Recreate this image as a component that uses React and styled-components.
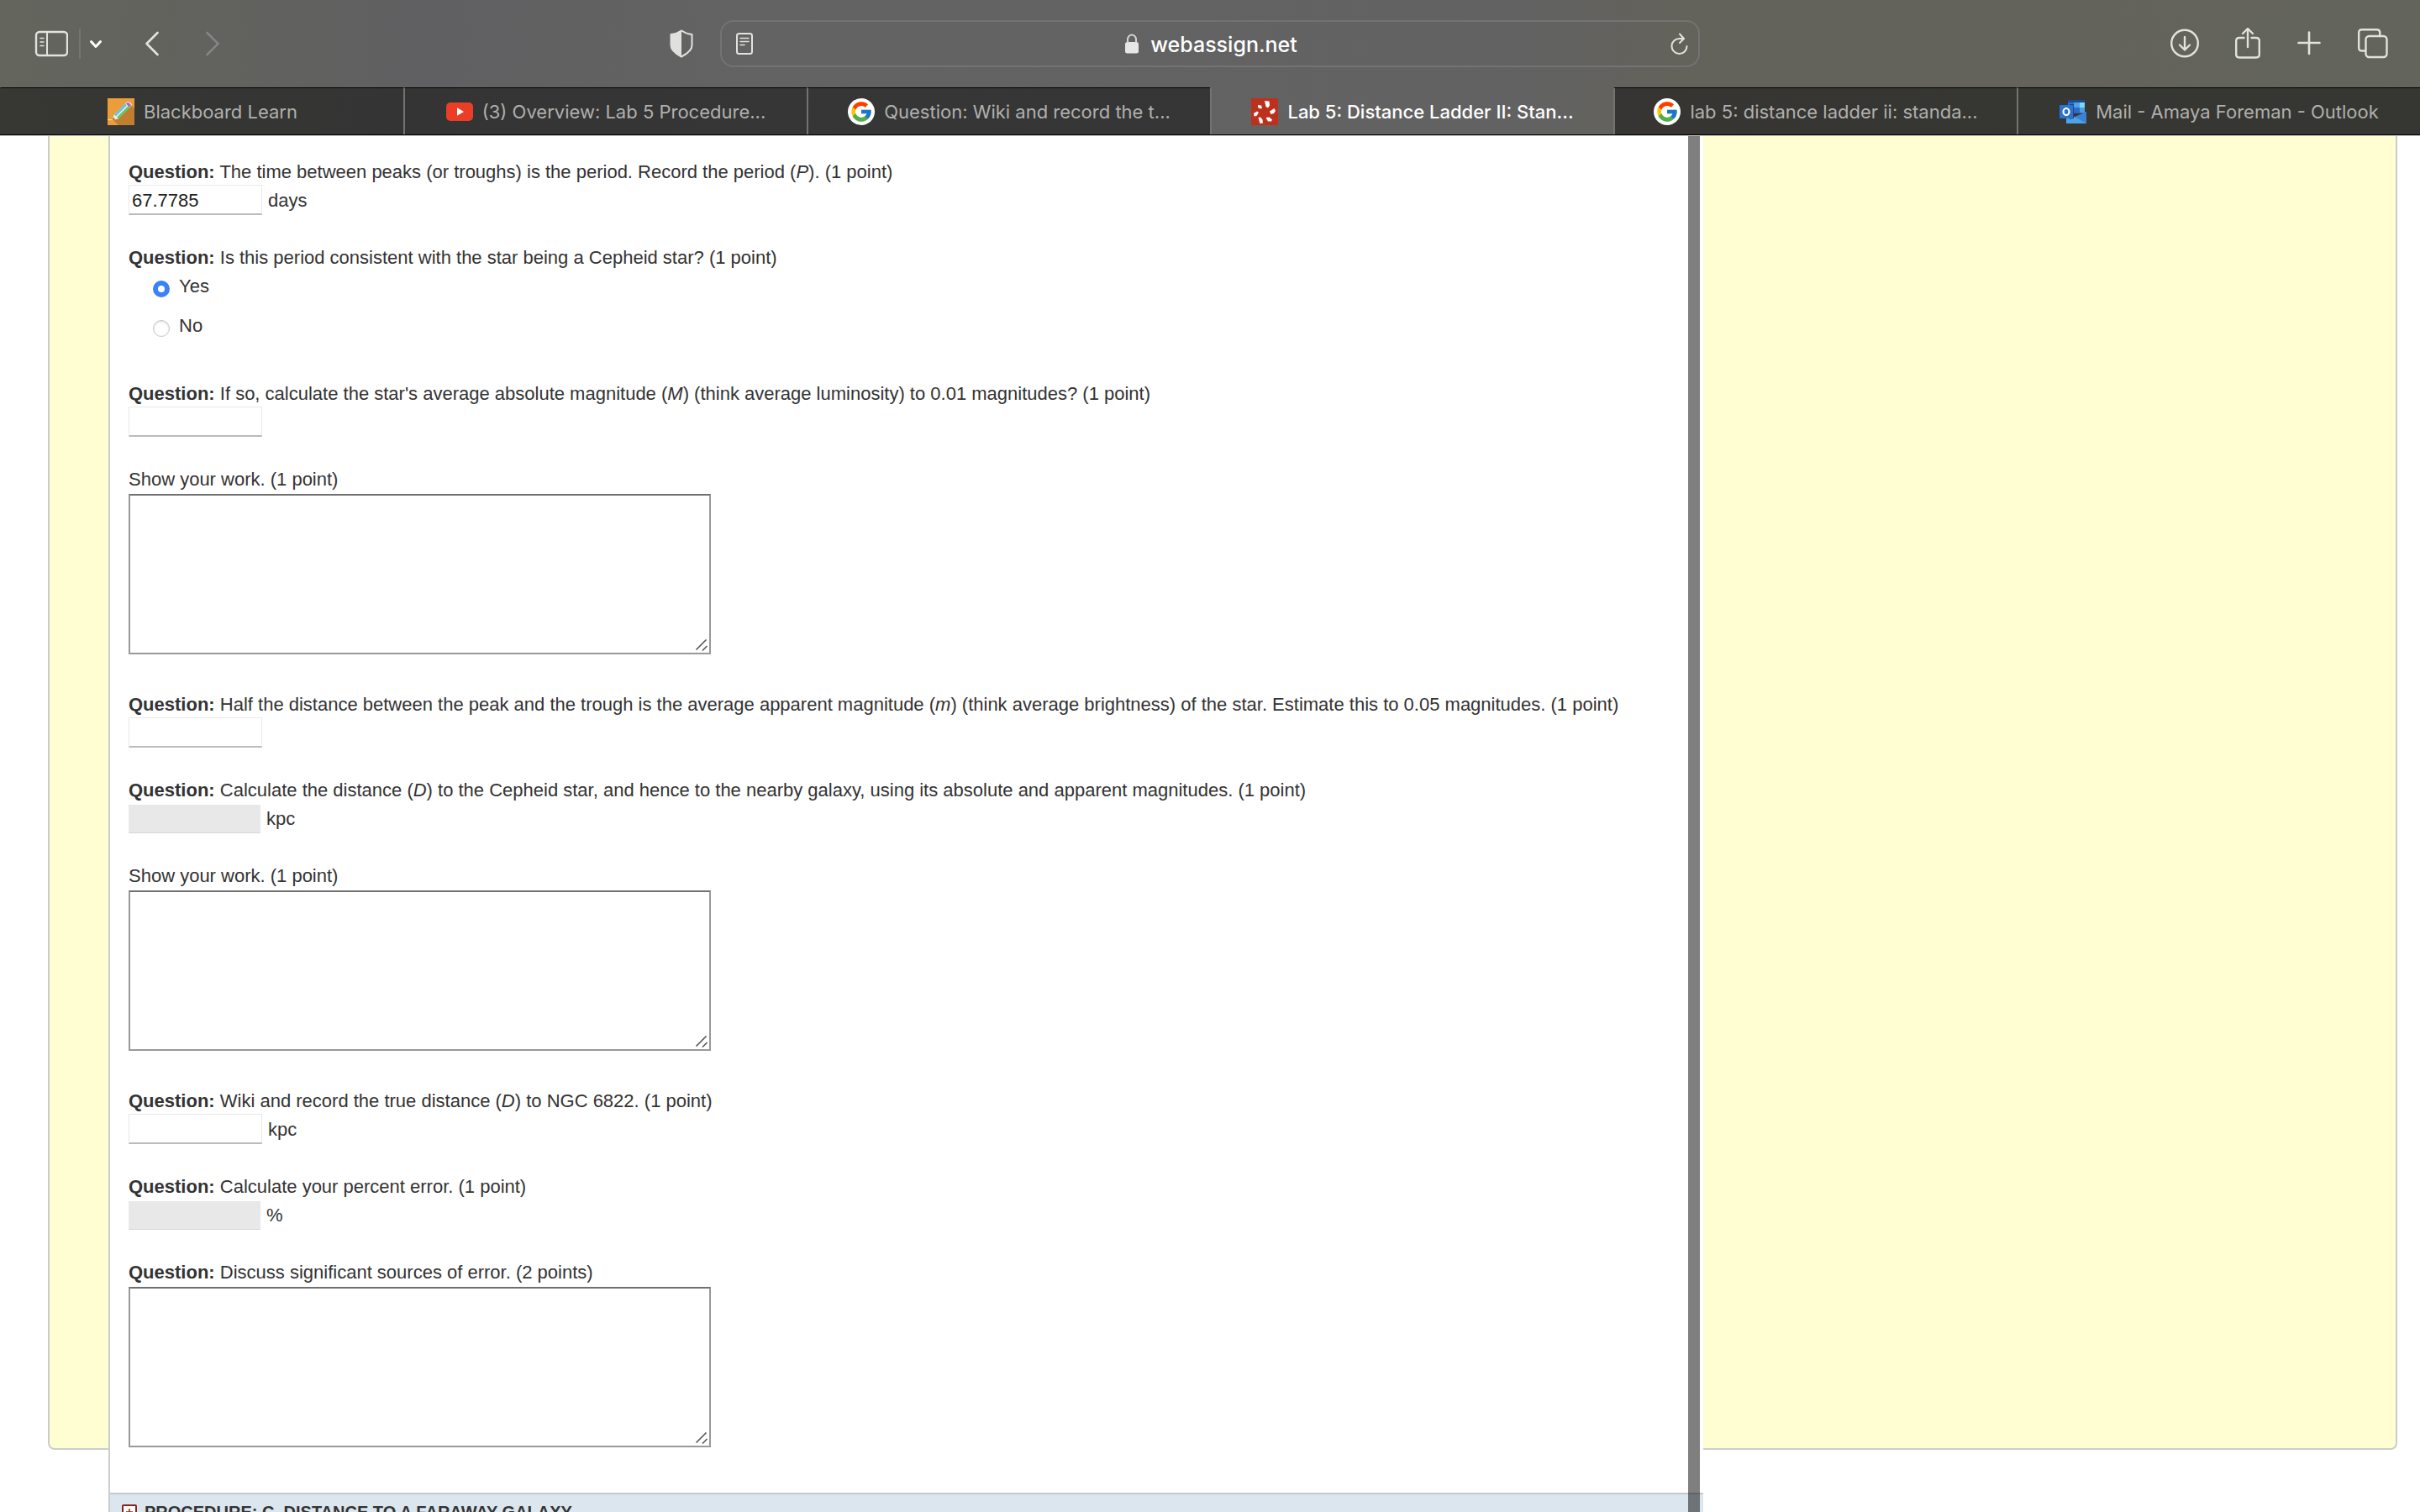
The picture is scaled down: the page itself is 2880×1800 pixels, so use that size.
import React, { useState } from 'react';
import styled, { createGlobalStyle } from 'styled-components';
import { FcGoogle } from 'react-icons/fc';

const TABS = [
  { title: 'Blackboard Learn', icon: 'pencil' },
  { title: '(3) Overview: Lab 5 Procedure...', icon: 'youtube' },
  { title: 'Question: Wiki and record the t...', icon: 'google' },
  { title: 'Lab 5: Distance Ladder II: Stan...', icon: 'webassign' },
  { title: 'lab 5: distance ladder ii: standa...', icon: 'google' },
  { title: 'Mail - Amaya Foreman - Outlook', icon: 'outlook' },
];

//////////  FAVICONS

const PencilIcon = () => (
  <svg width="32" height="32" viewBox="0 0 32 32" aria-hidden="true">
    <rect width="32" height="32" fill="#eb9d3a" />
    <path d="M28 8 32 12V32H13L7 26Z" fill="#c17e2c" />
    <path d="M0 25.500H8" stroke="#f6d6a4" strokeWidth="1.200" />
    <path d="M6 26 7.500 20 23 4.500Q25 3 27.500 5.500T28 9L12.500 24.500Z" fill="#f4f1e4" />
    <path d="M9 20.500 22 7.500" stroke="#5bc3ef" strokeWidth="2.600" />
    <path d="M12 23.500 25.500 10" stroke="#62c46c" strokeWidth="2.600" />
    <path d="m22.500 6.500 2-1.500 3 3-1.500 2Z" fill="#a865c0" stroke="#a865c0" />
    <path d="m6 26 1-3 2 2Z" fill="#6b4a25" />
  </svg>
);

const YoutubeIcon = () => (
  <svg width="32" height="32" viewBox="0 0 32 32" aria-hidden="true">
    <rect y="5" width="32" height="22" rx="5" fill="#ea3f26" />
    <path d="M13 11.300 21 16l-8 4.700Z" fill="#fff" />
  </svg>
);

const WebAssignIcon = () => (
  <svg width="32" height="32" viewBox="0 0 32 32" aria-hidden="true">
    <rect width="32" height="32" fill="#bd301c" />
    <g fill="#fff">
      <path d="m16 3 5.500.500.500 5-2 3-2.500-1.500Z" />
      <path d="m22 15.500 5.500-3.500 1.500 3-2 3-3.500 1Z" />
      <path d="m17.500 23 4-.5 3.500 3-1 2h-4Z" />
      <path d="m8.500 23 2.500-.5 2.500 3 .5 4-3.500.5Z" />
      <path d="m3 18 4-2.500 2 1.500-2.500 4-3 .5Z" />
      <path d="m8 8 4 .5 1 3-2 1-3-1.500Z" />
    </g>
  </svg>
);

const OutlookIcon = () => (
  <svg width="32" height="32" viewBox="0 0 32 32" aria-hidden="true">
    <path d="M10 2h20v16H10Z" fill="#2a66c0" />
    <path d="M10 2h20v3H10Z" fill="#204a90" />
    <path d="M10 5h7v7h-7Z" fill="#2c6fce" />
    <path d="M17 5h7v6h-7Z" fill="#4ba3ea" />
    <path d="M24 5h6v6h-6Z" fill="#79d7fa" />
    <path d="M17 11h7v6h-7Z" fill="#2f6bc6" />
    <path d="M24 11h6v6h-6Z" fill="#4a9ee6" />
    <path d="M8 17 20 23 32 16v14H8Z" fill="#4ea3e8" />
    <path d="m18 22 14 8V16Z" fill="#3c82d2" />
    <path d="M12 7h5v17l-5 1Z" fill="#1f4684" />
    <rect y="8" width="16" height="16" rx="1" fill="#2d72cf" />
    <ellipse cx="8" cy="16" rx="3.500" ry="4" fill="none" stroke="#fff" strokeWidth="2.200" />
  </svg>
);

const GoogleIcon = () => (
  <GoogleDisc>
    <FcGoogle size={28} aria-hidden="true" />
  </GoogleDisc>
);

const FAVICONS = {
  pencil: PencilIcon,
  youtube: YoutubeIcon,
  google: GoogleIcon,
  webassign: WebAssignIcon,
  outlook: OutlookIcon,
};

//////////  BROWSER BAR

function Toolbar() {
  return (
    <Bar>
      <BarSide>
        <BarButton aria-label="Sidebar">
          <Stroke width="40" height="32" viewBox="0 0 40 32">
            <rect x="2" y="2" width="37" height="28" rx="4" />
            <path d="M15 2v28" strokeWidth="2" />
            <path d="M7 9.500h4M7 14h4M7 18.500h4" strokeWidth="1.600" />
          </Stroke>
        </BarButton>
        <Divider />
        <BarButton aria-label="Tab groups">
          <Stroke width="16" height="32" viewBox="0 0 16 32" $color="#fff">
            <path d="m2.500 13.500 5.500 6 5.500-6" strokeWidth="3" />
          </Stroke>
        </BarButton>
        <BarButton aria-label="Back" $gap={50}>
          <Stroke width="18" height="32" viewBox="0 0 18 32">
            <path d="M15.500 3 2.500 16l13 13" strokeWidth="2.600" />
          </Stroke>
        </BarButton>
        <BarButton aria-label="Forward" $gap={54} disabled>
          <Stroke width="18" height="32" viewBox="0 0 18 32" $color="#858585">
            <path d="m2.500 3 13 13-13 13" strokeWidth="2.600" />
          </Stroke>
        </BarButton>
        <ShieldButton aria-label="Privacy report">
          <Stroke width="28" height="34" viewBox="0 0 28 34">
            <path d="M14 1.500Q20 5.500 26.500 6v13Q26.500 26 14 32.500 1.500 26 1.500 19V6Q8 5.500 14 1.500Z" strokeWidth="2" />
            <path d="M14 1.500v31Q1.500 26 1.500 19V6Q8 5.500 14 1.500Z" fill="#e0e0df" stroke="none" />
          </Stroke>
        </ShieldButton>
      </BarSide>

      <AddressBar>
        <BarButton aria-label="Reader">
          <Stroke width="20" height="26" viewBox="0 0 20 26">
            <rect x="1" y="1" width="18" height="24" rx="2.500" strokeWidth="2" />
            <path d="M5 6.500h10M5 10.500h10M5 14.500h5" strokeWidth="1.600" />
          </Stroke>
        </BarButton>
        <Address>
          <svg width="16" height="24" viewBox="0 0 16 24" aria-hidden="true">
            <rect y="10" width="16" height="13.500" rx="2.500" fill="#e6e6e6" />
            <path d="M3 11V7a5 5.500 0 0 1 10 0v4" fill="none" stroke="#d4d4d4" strokeWidth="2" />
          </svg>
          <AddressInput aria-label="Address" defaultValue="webassign.net" />
        </Address>
        <BarButton aria-label="Reload">
          <Stroke width="22" height="26" viewBox="0 0 22 26">
            <path d="M20.500 16A9 9 0 1 1 12 7h4.500" strokeWidth="2" />
            <path d="m12 1.500 5 5.500-5 5" strokeWidth="2" />
          </Stroke>
        </BarButton>
      </AddressBar>

      <BarSide $end>
        <BarButton aria-label="Downloads">
          <Stroke width="34" height="38" viewBox="0 0 34 38">
            <circle cx="17" cy="18.500" r="15.800" />
            <path d="M17 11v15M11 20.500l6 6 6-6" strokeWidth="2.400" />
          </Stroke>
        </BarButton>
        <BarButton aria-label="Share" $gap={43}>
          <Stroke width="30" height="38" viewBox="0 0 30 38">
            <path d="M10.500 12H5q-3.800 0-3.800 3.800v16Q1.200 35.500 5 35.500h20q3.800 0 3.800-3.700v-16Q28.800 12 25 12h-5.500" />
            <path d="M15 23V1.500M9 7l6-6 6 6" />
          </Stroke>
        </BarButton>
        <BarButton aria-label="New tab" $gap={44}>
          <Stroke width="28" height="38" viewBox="0 0 28 38">
            <path d="M14 5.500v25.500M1.500 18h25" strokeWidth="2.600" />
          </Stroke>
        </BarButton>
        <BarButton aria-label="Tab overview" $gap={44}>
          <Stroke width="36" height="38" viewBox="0 0 36 38">
            <rect x="9.500" y="10" width="25" height="25" rx="4" />
            <path d="M9 27.500H5q-3.800 0-3.800-3.800V6q0-3.800 3.800-3.800h17.500q3.800 0 3.800 3.800V10" />
          </Stroke>
        </BarButton>
      </BarSide>
    </Bar>
  );
}

//////////  WORKSHEET

function Prompt({ id, children, plain }) {
  return (
    <Label htmlFor={id}>
      {!plain && <><b>Question:</b> </>}
      {children}
    </Label>
  );
}

function Answer({ id, unit, value, disabled }) {
  return (
    <AnswerRow>
      <AnswerInput id={id} defaultValue={value} disabled={disabled} />
      {unit && <span>{unit}</span>}
    </AnswerRow>
  );
}

function WorkArea({ id }) {
  return (
    <WorkBox>
      <WorkText id={id} />
      <Grip width="16" height="16" viewBox="0 0 16 16" aria-hidden="true">
        <path d="M1.500 13.500 13.500 1.500M9 14.500 14.500 9" stroke="#555" strokeWidth="1.600" />
      </Grip>
    </WorkBox>
  );
}

function Worksheet() {
  const [consistent, setConsistent] = useState('Yes');

  return (
    <Sheet>
      <Block>
        <Prompt id="period">The time between peaks (or troughs) is the period. Record the period (<i>P</i>). (1 point)</Prompt>
        <Answer id="period" value="67.7785" unit="days" />
      </Block>
      <Choices>
        <legend><b>Question:</b> Is this period consistent with the star being a Cepheid star? (1 point)</legend>
        {['Yes', 'No'].map((choice) => (
          <Choice key={choice}>
            <Radio
              type="radio"
              name="consistent"
              checked={consistent === choice}
              onChange={() => setConsistent(choice)}
            />
            {choice}
          </Choice>
        ))}
      </Choices>
      <Block>
        <Prompt id="absolute">If so, calculate the star's average absolute magnitude (<i>M</i>) (think average luminosity) to 0.01 magnitudes? (1 point)</Prompt>
        <Answer id="absolute" />
      </Block>
      <Block>
        <Prompt id="absolute-work" plain>Show your work. (1 point)</Prompt>
        <WorkArea id="absolute-work" />
      </Block>
      <Block>
        <Prompt id="apparent">Half the distance between the peak and the trough is the average apparent magnitude (<i>m</i>) (think average brightness) of the star. Estimate this to 0.05 magnitudes. (1 point)</Prompt>
        <Answer id="apparent" />
      </Block>
      <Block>
        <Prompt id="distance">Calculate the distance (<i>D</i>) to the Cepheid star, and hence to the nearby galaxy, using its absolute and apparent magnitudes. (1 point)</Prompt>
        <Answer id="distance" unit="kpc" disabled />
      </Block>
      <Block>
        <Prompt id="distance-work" plain>Show your work. (1 point)</Prompt>
        <WorkArea id="distance-work" />
      </Block>
      <Block>
        <Prompt id="wiki">Wiki and record the true distance (<i>D</i>) to NGC 6822. (1 point)</Prompt>
        <Answer id="wiki" unit="kpc" />
      </Block>
      <Block>
        <Prompt id="error">Calculate your percent error. (1 point)</Prompt>
        <Answer id="error" unit="%" disabled />
      </Block>
      <Block>
        <Prompt id="sources">Discuss significant sources of error. (2 points)</Prompt>
        <WorkArea id="sources" />
      </Block>
    </Sheet>
  );
}

function App() {
  const [active, setActive] = useState(3);

  return (
    <>
      <GlobalStyle />
      <Window>
        <Chrome>
          <Toolbar />
          <TabStrip role="tablist">
            {TABS.map((tab, idx) => {
              const Icon = FAVICONS[tab.icon];
              return (
                <Tab
                  key={idx}
                  role="tab"
                  aria-selected={idx === active}
                  $active={idx === active}
                  onClick={() => setActive(idx)}
                >
                  <Icon />
                  <span>{tab.title}</span>
                </Tab>
              );
            })}
          </TabStrip>
        </Chrome>
        <Main>
          <Backdrop />
          <Panel>
            <Worksheet />
            <SectionHeader>
              <svg width="18" height="18" viewBox="0 0 18 18" aria-hidden="true">
                <rect x="1" y="1" width="16" height="16" rx="1" fill="#fff" stroke="#8c2020" strokeWidth="2" />
                <path d="M9 5v8M5 9h8" stroke="#8c2020" strokeWidth="1.500" />
              </svg>
              PROCEDURE: C. DISTANCE TO A FARAWAY GALAXY
            </SectionHeader>
            <Edge />
          </Panel>
        </Main>
      </Window>
    </>
  );
}

export default App;

const GlobalStyle = createGlobalStyle`
  * {
    box-sizing: border-box;
  }
  body {
    margin: 0;
    background: #fff;
  }
  button, input, textarea {
    margin: 0;
    font: inherit;
  }
`;

const Window = styled.div`
  display: flex;
  flex-direction: column;
  height: 100vh;
  overflow: hidden;
`;

const Chrome = styled.header`
  flex: none;
  border-bottom: 1px solid #000;
  background: linear-gradient(90deg, #64655d 0%, #62625e 9%, #606062 17%, #636363 32%, #626262 63%, #63625b 69%, #63645b 100%);
  font-family: Inter, sans-serif;
`;

const Bar = styled.div`
  display: grid;
  grid-template-columns: 857fr 1166fr 857fr;
  align-items: center;
  height: 104px;
`;

const BarSide = styled.div`
  display: flex;
  align-items: center;
  justify-content: ${({ $end }) => ($end ? 'flex-end' : 'flex-start')};
  padding: ${({ $end }) => ($end ? '0 38px 0 0' : '0 32px 0 41px')};
`;

const BarButton = styled.button`
  display: flex;
  margin-left: ${({ $gap = 0 }) => $gap}px;
  padding: 0;
  border: 0;
  background: none;
`;

const ShieldButton = styled(BarButton)`
  margin-left: auto;
`;

const Stroke = styled.svg`
  display: block;
  fill: none;
  stroke: ${({ $color = '#e2e2de' }) => $color};
  stroke-width: 2.400;
  stroke-linecap: round;
  stroke-linejoin: round;
`;

const Divider = styled.span`
  width: 2px;
  height: 36px;
  margin: 0 10px 0 13px;
  background: #747570;
`;

const AddressBar = styled.div`
  display: flex;
  align-items: center;
  justify-content: space-between;
  height: 56px;
  padding: 0 12px 0 17px;
  border: 2px solid #737373;
  border-radius: 16px;
`;

const Address = styled.div`
  display: flex;
  align-items: center;
  gap: 14px;
`;

const AddressInput = styled.input`
  field-sizing: content;
  padding: 1px 0 0;
  border: 0;
  background: none;
  color: #fff;
  font-size: 25px;
  font-weight: 500;
  line-height: 32px;
`;

const TabStrip = styled.div`
  display: grid;
  grid-template-columns: repeat(6, minmax(0, 1fr));
`;

const Tab = styled.button`
  display: flex;
  align-items: center;
  justify-content: center;
  gap: 11px;
  height: 56px;
  padding: 0;
  border: 0;
  border-top: 1px solid ${({ $active }) => ($active ? 'transparent' : '#000')};
  border-left: 2px solid #737370;
  background: ${({ $active }) => ($active ? 'none' : 'rgba(0, 0, 0, 0.45)')};
  background-clip: padding-box;
  color: ${({ $active }) => ($active ? '#fff' : '#b0b0ae')};
  font-size: 22px;
  font-weight: ${({ $active }) => ($active ? 500 : 400)};
  white-space: nowrap;
  &:first-child {
    border-left-color: transparent;
    background-clip: border-box;
  }
`;

const GoogleDisc = styled.span`
  display: flex;
  align-items: center;
  justify-content: center;
  width: 32px;
  height: 32px;
  border-radius: 50%;
  background: #fff;
`;

const Main = styled.main`
  display: grid;
  flex: 1;
  grid-template-columns: 129px minmax(0, 1898px) 1fr;
  grid-template-rows: minmax(0, 1fr);
  min-height: 0;
  border-top: 1px solid #c8c8c8;
  color: #333;
  font-family: "Liberation Sans", Arial, sans-serif;
  font-size: 22px;
  line-height: 34px;
`;

const Backdrop = styled.div`
  grid-area: 1 / 1 / 2 / 4;
  margin: 0 27px 74px 57px;
  border: 2px solid #ccc;
  border-top: 0;
  border-radius: 0 0 8px 8px;
  background: #fffed3;
`;

const Panel = styled.section`
  grid-area: 1 / 2 / 2 / 3;
  position: relative;
  overflow: hidden;
  border-left: 2px solid #ccc;
  background: #fff;
`;

const Edge = styled.div`
  position: absolute;
  top: 0;
  right: 4px;
  bottom: 0;
  width: 14px;
  background: rgba(0, 0, 0, 0.5);
`;

const Sheet = styled.form`
  display: flex;
  flex-direction: column;
  gap: 34px;
  padding: 26px 22px 45px;
`;

const Block = styled.div`
  display: flex;
  flex-direction: column;
  align-items: flex-start;
`;

const Label = styled.label`
  display: block;
`;

const AnswerRow = styled.div`
  display: flex;
  align-items: flex-end;
  gap: 7px;
  height: 34px;
`;

const AnswerInput = styled.input`
  width: 159px;
  height: 36px;
  padding: 2px 3px 0;
  border: 1px solid #e8e8e8;
  border-bottom: 2px solid #bbb;
  background: #fff;
  color: #222;
  &:disabled {
    width: 157px;
    height: 34px;
    border-bottom: 1px solid #d6d6d6;
    background: #e8e8e8;
  }
`;

const Choices = styled.fieldset`
  margin: 0;
  padding: 0;
  border: 0;
  legend {
    padding: 0;
  }
`;

const Choice = styled.label`
  display: flex;
  align-items: flex-start;
  gap: 11px;
  height: 47px;
  padding-left: 29px;
`;

const Radio = styled.input`
  appearance: none;
  width: 20px;
  height: 20px;
  margin-top: 10px;
  border: 1px solid #c6c6c6;
  border-radius: 50%;
  background: #fff;
  box-shadow: inset 0 1px 2px rgba(0, 0, 0, 0.15);
  &:checked {
    border: 6px solid #3b82f7;
    box-shadow: none;
  }
`;

const WorkBox = styled.div`
  position: relative;
  width: 693px;
  max-width: 100%;
  margin-bottom: 9px;
`;

const WorkText = styled.textarea`
  display: block;
  width: 100%;
  height: 191px;
  padding: 4px;
  border: 2px solid #999;
  border-top-color: #707070;
  background: #fff;
  resize: none;
`;

const Grip = styled.svg`
  position: absolute;
  right: 3px;
  bottom: 3px;
  fill: none;
`;

const SectionHeader = styled.h2`
  display: flex;
  align-items: center;
  gap: 9px;
  margin: 0;
  padding: 4px 14px;
  border-top: 2px solid #c8c8c8;
  background: #dce6ee;
  font-size: 20px;
  line-height: 34px;
`;
